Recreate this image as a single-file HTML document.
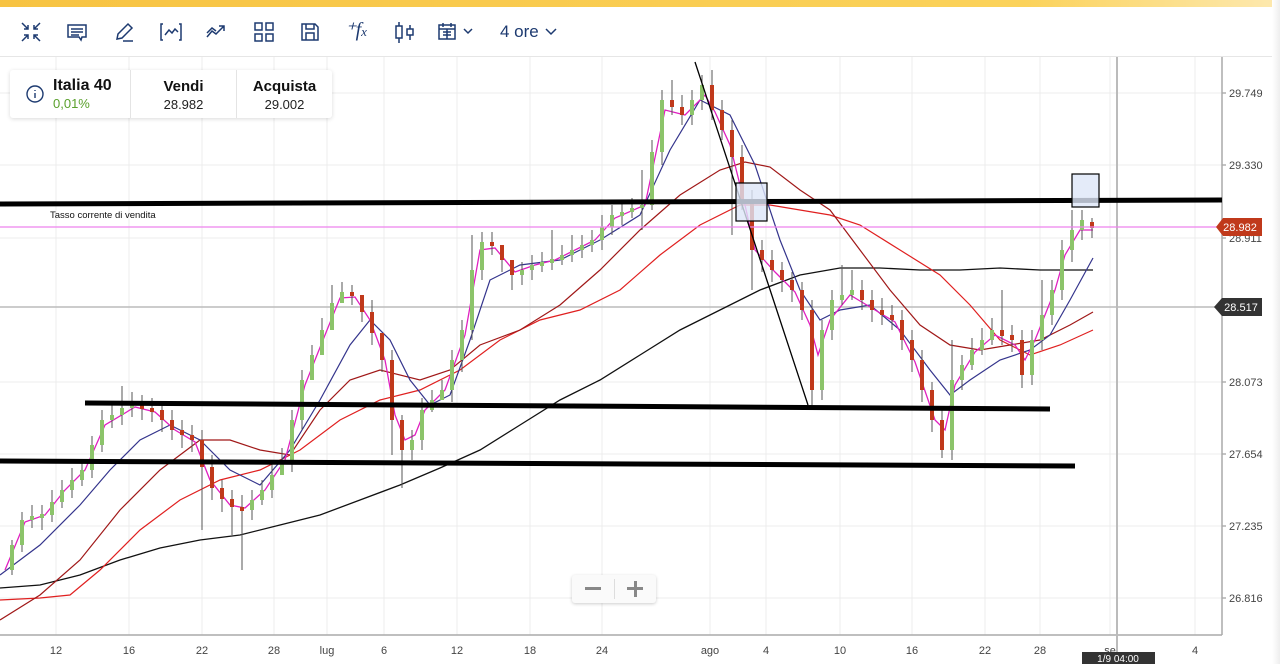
<!DOCTYPE html>
<html><head><meta charset="utf-8"><style>
*{margin:0;padding:0;box-sizing:border-box}
body{width:1280px;height:664px;overflow:hidden;background:#fff;font-family:"Liberation Sans",sans-serif;position:relative}
.top{position:absolute;left:0;top:0;width:1280px;height:7px;background:linear-gradient(90deg,#f7c342,#fbd25a 80%,#fde9b0)}
.tb{position:absolute;left:0;top:7px;width:1280px;height:50px;border-bottom:1px solid #e6e6e6;background:#fff}
.tb svg{position:absolute;top:14px}
.card{position:absolute;left:10px;top:70px;width:322px;height:48px;background:#fff;box-shadow:0 1px 4px rgba(0,0,0,.15);border-radius:3px}
.card .c{position:absolute;top:0;height:48px;border-right:1px solid #e4e4e4}
.card b{font-size:16px;color:#111}
.card span{font-size:13px;color:#222}
.rb{position:absolute;right:0;top:0;width:8px;height:664px;background:linear-gradient(90deg,#fff,#eee)}
</style></head><body>
<div class="top"></div>
<svg width="1280" height="664" style="position:absolute;left:0;top:0" font-family="Liberation Sans, sans-serif" font-size="11" fill="#444">
<g stroke="#ececec" stroke-width="1">
<path d="M56 57V635M129 57V635M202 57V635M274 57V635M327 57V635M384 57V635M457 57V635M530 57V635M602 57V635M710 57V635M766 57V635M840 57V635M912 57V635M985 57V635M1040 57V635M1110 57V635M1195 57V635"/>
<path d="M0 93H1222M0 165H1222M0 238H1222M0 382H1222M0 454H1222M0 526H1222M0 598H1222"/>
</g>
<g stroke="#888"><path d="M1222 93h4M1222 165h4M1222 238h4M1222 382h4M1222 454h4M1222 526h4M1222 598h4"/></g>
<g text-anchor="start"><text x="1229" y="97">29.749</text><text x="1229" y="169">29.330</text><text x="1229" y="242">28.911</text><text x="1229" y="386">28.073</text><text x="1229" y="458">27.654</text><text x="1229" y="530">27.235</text><text x="1229" y="602">26.816</text></g>
<g text-anchor="middle"><text x="56" y="654">12</text><text x="129" y="654">16</text><text x="202" y="654">22</text><text x="274" y="654">28</text><text x="327" y="654">lug</text><text x="384" y="654">6</text><text x="457" y="654">12</text><text x="530" y="654">18</text><text x="602" y="654">24</text><text x="710" y="654">ago</text><text x="766" y="654">4</text><text x="840" y="654">10</text><text x="912" y="654">16</text><text x="985" y="654">22</text><text x="1040" y="654">28</text><text x="1110" y="654">se</text><text x="1195" y="654">4</text></g>
<path d="M0 635H1222M1222 57V635" stroke="#aaa" stroke-width="1.5"/>
<path d="M1117 57V664" stroke="#bbb" stroke-width="2"/>
<path d="M0 307H1222" stroke="#bbb" stroke-width="1.5"/>
<g fill="none">
<polyline stroke="#111" stroke-width="1.3" points="0,588 40,585 80,575 120,560 160,548 200,540 240,535 280,525 320,515 360,500 400,485 440,468 480,450 520,425 560,400 600,380 640,355 680,330 720,310 760,290 800,275 840,268 880,268 920,270 960,270 1000,268 1040,270 1093,270"/>
<polyline stroke="#e02020" stroke-width="1.2" points="0,600 40,598 70,595 100,570 140,530 180,500 220,480 260,470 300,450 340,420 380,400 420,390 460,370 500,340 540,320 580,310 620,290 660,255 700,225 740,205 770,205 800,210 830,215 860,225 900,250 940,275 970,305 1000,340 1030,355 1060,345 1093,330"/>
<polyline stroke="#a01818" stroke-width="1.2" points="0,620 40,595 80,560 120,510 160,470 200,440 230,440 260,450 290,455 320,410 350,380 380,370 420,380 450,370 480,345 520,330 560,305 600,270 640,230 680,195 720,170 745,162 770,167 800,190 830,210 860,250 890,290 920,325 950,345 980,350 1010,345 1040,340 1070,325 1093,312"/>
<polyline stroke="#34348c" stroke-width="1.2" points="0,575 40,545 80,505 110,470 140,440 170,425 200,440 230,470 260,485 290,450 320,400 350,345 370,320 390,340 410,380 430,405 450,395 470,340 490,280 520,265 560,260 600,240 640,215 670,150 700,100 730,115 755,165 780,240 800,290 820,320 840,310 870,305 900,330 930,370 950,395 970,380 1000,360 1030,350 1050,335 1070,300 1093,258"/>
<polyline stroke="#e020c0" stroke-width="1.3" points="5,570 25,522 45,515 65,490 85,470 105,425 135,407 155,412 175,430 195,442 210,480 230,505 245,508 265,490 285,460 305,385 325,335 340,298 355,297 370,320 385,360 395,415 405,440 415,435 425,410 445,390 465,335 480,250 495,248 515,272 535,265 555,260 575,250 595,240 615,218 645,205 665,110 685,115 705,95 715,112 730,145 745,205 755,250 775,272 795,292 810,325 818,355 830,320 850,295 875,310 895,322 915,362 935,420 945,430 955,385 975,352 995,335 1015,345 1025,360 1035,340 1055,290 1065,255 1080,230 1093,230"/>
</g>
<path stroke="#555" stroke-width="1" d="M12 540V575M22 512V552M32 505V528M42 505V530M52 490V522M62 480V508M72 468V498M82 460V486M92 436V478M102 410V452M112 405V428M122 386V425M132 392V417M142 395V420M152 398V422M162 402V432M172 410V440M182 420V448M192 425V452M202 430V530M212 455V500M222 480V512M232 490V535M242 495V570M252 490V520M262 480V505M272 462V498M282 448V475M292 410V472M302 370V430M312 345V368M322 318V342M332 285V315M342 282V302M352 285V305M362 302V322M372 300V345M382 345V372M392 350V455M402 415V488M412 430V460M422 398V450M432 390V412M442 380V400M452 350V402M462 320V372M472 235V340M482 232V280M492 232V255M502 250V272M512 262V290M522 262V285M532 255V280M542 252V272M552 230V270M562 245V265M572 235V262M582 235V258M592 230V252M602 215V250M612 205V235M622 200V225M632 198V218M642 170V230M652 140V210M662 90V165M672 80V115M682 95V125M692 90V125M702 75V110M712 70V120M722 100V140M732 120V235M742 145V210M752 190V290M762 240V272M772 250V282M782 262V292M792 272V302M802 282V320M812 300V410M822 320V400M832 290V340M842 265V305M852 270V300M862 280V310M872 290V322M882 298V325M892 305V330M902 310V350M912 330V372M922 350V402M932 382V432M942 410V458M952 340V460M962 355V390M972 338V370M982 328V355M992 318V345M1002 290V345M1012 325V352M1022 330V388M1032 330V385M1042 280V350M1052 280V325M1062 240V300M1072 210V262M1082 210V240M1092 218V238"/>
<path stroke="#8cc46a" stroke-width="4" d="M12 570V545M22 545V520M32 520V516M42 518V514M52 515V502M62 502V490M72 490V480M82 480V470M92 470V445M102 445V420M112 420V415M122 415V408M132 408V405M252 510V500M262 500V490M272 490V475M282 475V460M292 460V420M302 420V380M312 380V355M322 355V330M332 330V303M342 303V292M412 450V440M422 440V410M432 410V400M442 400V390M452 390V360M462 360V330M472 330V270M482 270V242M522 275V270M532 270V265M542 266V262M552 263V259M562 260V255M572 255V250M582 250V245M592 245V240M602 240V227M612 227V215M622 216V212M632 212V208M642 208V205M652 205V152M662 152V100M692 115V100M702 100V85M822 390V330M832 330V300M842 300V295M852 295V290M952 450V380M962 380V365M972 365V350M982 350V340M992 340V330M1032 375V340M1042 340V315M1052 315V290M1062 290V250M1072 250V230M1082 230V220"/>
<path stroke="#c0391b" stroke-width="4" d="M142 405V409M152 408V412M162 410V420M172 420V430M182 430V435M192 435V440M202 440V467M212 467V488M222 488V499M232 499V507M242 507V511M352 292V296M362 295V312M372 312V333M382 333V360M392 360V420M402 420V450M492 242V246M502 245V260M512 260V275M672 100V107M682 107V115M712 85V110M722 110V130M732 130V157M742 157V200M752 200V250M762 250V260M772 260V270M782 270V280M792 280V290M802 290V310M812 310V390M862 290V300M872 300V310M882 310V315M892 315V320M902 320V340M912 340V360M922 360V390M932 390V420M942 420V450M1002 330V336M1012 335V340M1022 340V375M1092 222V228"/>
<path d="M0 227H1222" stroke="#ee82ee" stroke-width="1.3"/>
<path d="M1216 227l7-9h39v18h-39z" fill="#c0391b"/><text x="1240" y="231" fill="#fff" text-anchor="middle">28.982</text>
<path d="M1214 307l8-9h40v18h-40z" fill="#333"/><text x="1241" y="311" fill="#fff" text-anchor="middle">28.517</text>
<path d="M0 204L1222 200M85 403L1050 409M0 461L1075 466" stroke="#000" stroke-width="5"/>
<path d="M695 62L808 405" stroke="#000" stroke-width="1.3"/>
<rect x="736" y="183" width="31" height="38" fill="#dde6f8" fill-opacity=".8" stroke="#000" stroke-width="1.2"/>
<rect x="1072" y="174" width="27" height="33" fill="#dde6f8" fill-opacity=".8" stroke="#000" stroke-width="1.2"/>
<text x="50" y="218" fill="#111" font-size="9.5">Tasso corrente di vendita</text>
<rect x="1082" y="652" width="73" height="14" fill="#333"/><text x="1118" y="662" fill="#fff" font-size="10" text-anchor="middle">1/9 04:00</text>
</svg>
<div class="tb">
<svg style="left:20px" width="22" height="22" viewBox="0 0 22 22" fill="none" stroke="#1d3a70" stroke-width="1.5"><path d="M2 2l6 6M8 4v4H4M20 2l-6 6M14 4v4h4M2 20l6-6M4 14h4v4M20 20l-6-6M18 14h-4v4"/></svg>
<svg style="left:66px" width="22" height="22" viewBox="0 0 22 22" fill="none" stroke="#1d3a70" stroke-width="1.5"><path d="M2 4h18v12h-4l-1 3-2-3H2zM5 8h12M5 11h12M5 14h8"/></svg>
<svg style="left:113px" width="22" height="22" viewBox="0 0 22 22" fill="none" stroke="#1d3a70" stroke-width="1.5"><path d="M4 18l1-5L15 3l4 4L9 17zM10 20h10"/></svg>
<svg style="left:159px" width="24" height="22" viewBox="0 0 24 22" fill="none" stroke="#1d3a70" stroke-width="1.5"><path d="M4 3H2v16h2M20 3h2v16h-2M6 14l4-5 3 3 3-4 3 3"/></svg>
<svg style="left:205px" width="24" height="22" viewBox="0 0 24 22" fill="none" stroke="#1d3a70" stroke-width="1.5"><path d="M2 16l5-6 4 3 8-8M14 5h5v5M2 12l5-5 4 3"/></svg>
<svg style="left:253px" width="22" height="22" viewBox="0 0 22 22" fill="none" stroke="#1d3a70" stroke-width="1.5"><rect x="2" y="2" width="7" height="7"/><rect x="13" y="2" width="7" height="7"/><rect x="2" y="13" width="7" height="7"/><rect x="13" y="13" width="7" height="7"/></svg>
<svg style="left:299px" width="22" height="22" viewBox="0 0 22 22" fill="none" stroke="#1d3a70" stroke-width="1.5"><path d="M3 3h13l3 3v13H3zM7 3v5h8V3M7 19v-7h8v7"/></svg>
<div style="position:absolute;left:345px;top:10px;font-family:'Liberation Serif',serif;font-style:italic;font-size:20px;color:#1d3a70">⁺<i>f</i><span style="font-size:13px">x</span></div>
<svg style="left:393px" width="24" height="24" viewBox="0 0 24 24" fill="none" stroke="#1d3a70" stroke-width="1.5"><rect x="3" y="5" width="6" height="12"/><path d="M6 1v4M6 17v5M14 8h6v6h-6zM17 4v4M17 14v5"/></svg>
<svg style="left:437px" width="38" height="22" viewBox="0 0 38 22" fill="none" stroke="#1d3a70" stroke-width="1.5"><rect x="2" y="4" width="16" height="14"/><path d="M2 8h16M6 2v4M14 2v4M6 11h8M6 14h8M10 8v10M27 8l4 4 4-4"/></svg>
<div style="position:absolute;left:500px;top:15px;font-size:17px;color:#1d3a70">4 ore</div>
<svg style="left:544px;top:19px" width="14" height="12" viewBox="0 0 14 12" fill="none" stroke="#1d3a70" stroke-width="1.5"><path d="M2 3l5 5 5-5"/></svg>
</div>
<div class="card">
<svg style="position:absolute;left:16px;top:15px" width="18" height="18" viewBox="0 0 18 18" fill="none" stroke="#1d3a70" stroke-width="1.4"><circle cx="9" cy="9" r="8"/><path d="M9 8v5M9 5v1"/></svg>
<div style="position:absolute;left:43px;top:7px"><b>Italia 40</b><br><span style="color:#5aa02c;font-size:13px">0,01%</span></div>
<div class="c" style="left:0;width:121px"></div>
<div class="c" style="left:121px;width:106px;text-align:center;padding-top:8px"><b style="font-size:15px">Vendi</b><br><span>28.982</span></div>
<div style="position:absolute;left:227px;width:95px;top:8px;text-align:center"><b style="font-size:15px">Acquista</b><br><span>29.002</span></div>
</div>
<div style="position:absolute;left:572px;top:575px;width:84px;height:28px;background:#fafafa;box-shadow:0 1px 3px rgba(0,0,0,.2);border-radius:3px">
<div style="position:absolute;left:42px;top:4px;width:1px;height:20px;background:#ddd"></div>
<div style="position:absolute;left:13px;top:12px;width:16px;height:3px;background:#888"></div>
<div style="position:absolute;left:55px;top:12px;width:16px;height:3px;background:#888"></div>
<div style="position:absolute;left:61.5px;top:6px;width:3px;height:16px;background:#888"></div>
</div>
<div class="rb"></div>
</body></html>
